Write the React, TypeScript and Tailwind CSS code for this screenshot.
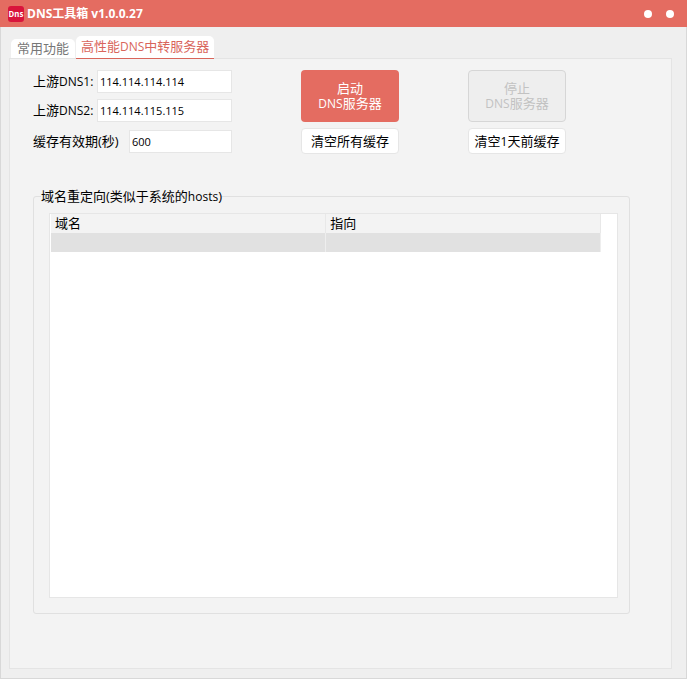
import { useState } from "react";

interface Redirect {
  domain: string;
  target: string;
}

interface FieldProps {
  id: string;
  label: React.ReactNode;
  labelWidth: string;
  value: string;
  onChange: (value: string) => void;
}

const redirects: Redirect[] = [{ domain: "", target: "" }];

// El texto latino va un punto más pequeño que el chino
const Latin: React.FC<{ children: React.ReactNode }> = ({ children }) => (
  <span className="text-[12px]">{children}</span>
);

const tabs = [
  { id: "common", label: <>常用功能</> },
  {
    id: "relay",
    label: (
      <>
        高性能<Latin>DNS</Latin>中转服务器
      </>
    ),
  },
];

const Field: React.FC<FieldProps> = ({
  id,
  label,
  labelWidth,
  value,
  onChange,
}) => (
  <div className="flex items-center">
    <label htmlFor={id} className={`${labelWidth} shrink-0 whitespace-nowrap`}>
      {label}
    </label>
    <input
      id={id}
      value={value}
      onChange={(e) => onChange(e.target.value)}
      className="h-[23px] w-full min-w-0 border border-[#e6e6e6] bg-white px-[2px] text-[11px] outline-none"
    />
  </div>
);

const TitleBar: React.FC = () => (
  <header className="flex h-[27px] items-center bg-[#e46c61] pr-[13px] pl-2 text-white">
    <svg viewBox="0 0 16 16" className="size-4" aria-hidden="true">
      <rect width="16" height="16" rx="3" fill="#d9143c" />
      <text
        x="8"
        y="11"
        textAnchor="middle"
        fontSize="8"
        fontWeight="600"
        fill="#fff"
        fontFamily="Noto Sans CJK SC, sans-serif"
      >
        Dns
      </text>
    </svg>
    <h1 className="ml-[3px] flex-1 text-[12px] font-bold">
      DNS工具箱 v1.0.0.27
    </h1>
    <div className="flex gap-[14px]">
      <button aria-label="最小化" className="size-2 rounded-full bg-white" />
      <button aria-label="关闭" className="size-2 rounded-full bg-white" />
    </div>
  </header>
);

const App: React.FC = () => {
  const [activeTab, setActiveTab] = useState("relay");
  const [dns1, setDns1] = useState("114.114.114.114");
  const [dns2, setDns2] = useState("114.114.115.115");
  const [ttl, setTtl] = useState("600");

  return (
    <div className="flex min-h-screen flex-col bg-[#efefef] font-['Open_Sans','Noto_Sans_CJK_SC',sans-serif] text-[13px] leading-[15px] text-black">
      <TitleBar />

      <main className="flex flex-1 flex-col border border-t-0 border-[#d8d8d8] pt-[9px] pr-[14px] pb-[9px] pl-2">
        {/* Pestañas */}
        <div role="tablist" className="flex items-end pl-[2px]">
          {tabs.map((tab) => (
            <button
              key={tab.id}
              role="tab"
              aria-selected={activeTab === tab.id}
              onClick={() => setActiveTab(tab.id)}
              className={
                activeTab === tab.id
                  ? "relative h-[23px] whitespace-nowrap rounded-t-[5px] border-b border-[#d9655b] bg-white px-[5px] pb-[2px] text-[#d9655b]"
                  : "mr-px h-5 whitespace-nowrap rounded-t-[5px] bg-white px-[6px] pb-[2px] text-[#777777]"
              }
            >
              {tab.label}
            </button>
          ))}
        </div>

        <section
          role="tabpanel"
          className="-mt-px flex-1 border border-[#e4e4e4] bg-[#f3f3f3] pt-[11px] pr-[41px] pb-[54px] pl-[23px]"
        >
          <div className="flex items-start gap-[69px]">
            <div className="flex w-[199px] flex-col gap-[6px]">
              <Field
                id="dns1"
                label={<>上游<Latin>DNS1:</Latin></>}
                labelWidth="w-16"
                value={dns1}
                onChange={setDns1}
              />
              <Field
                id="dns2"
                label={<>上游<Latin>DNS2:</Latin></>}
                labelWidth="w-16"
                value={dns2}
                onChange={setDns2}
              />
              <div className="pt-[2px]">
                <Field
                  id="ttl"
                  label="缓存有效期(秒)"
                  labelWidth="w-24"
                  value={ttl}
                  onChange={setTtl}
                />
              </div>
            </div>

            <div className="flex w-[98px] flex-col gap-[6px]">
              <button className="h-[52px] rounded-[4px] bg-[#e46c61] text-white">
                启动
                <br />
                <Latin>DNS</Latin>服务器
              </button>
              <button className="h-[26px] whitespace-nowrap rounded-[4px] border border-[#e6e6e6] bg-white">
                清空所有缓存
              </button>
            </div>

            <div className="flex w-[98px] flex-col gap-[6px]">
              <button
                disabled
                className="h-[52px] rounded-[4px] border border-[#d6d6d6] bg-[#eeeeee] text-[#c2c2c2]"
              >
                停止
                <br />
                <Latin>DNS</Latin>服务器
              </button>
              <button className="h-[26px] whitespace-nowrap rounded-[4px] border border-[#e6e6e6] bg-white">
                清空<Latin>1</Latin>天前缓存
              </button>
            </div>
          </div>

          {/* Redirecciones */}
          <fieldset className="mt-[33px] min-w-0 rounded-[3px] border border-[#e0e0e0] pr-[11px] pb-[15px] pl-[15px]">
            <legend className="-ml-2 leading-[18px]">
              域名重定向(类似于系统的<Latin>hosts</Latin>)
            </legend>
            <div className="mt-[7px] min-h-[385px] border border-[#e6e6e6] bg-white pr-4 pl-px">
              <table className="w-full table-fixed border-collapse text-left">
                <thead>
                  <tr className="h-[19px] bg-[#f3f3f3]">
                    <th className="border-r border-[#e8e8e8] px-1 font-normal">域名</th>
                    <th className="border-r border-[#e8e8e8] px-1 font-normal">指向</th>
                  </tr>
                </thead>
                <tbody>
                  {redirects.map((row, index) => (
                    <tr key={index} className="h-[19px] bg-[#e1e1e1]">
                      <td className="border-r border-[#eeeeee] px-1">{row.domain}</td>
                      <td className="border-r border-[#eeeeee] px-1">{row.target}</td>
                    </tr>
                  ))}
                </tbody>
              </table>
            </div>
          </fieldset>
        </section>
      </main>
    </div>
  );
};

export default App;
